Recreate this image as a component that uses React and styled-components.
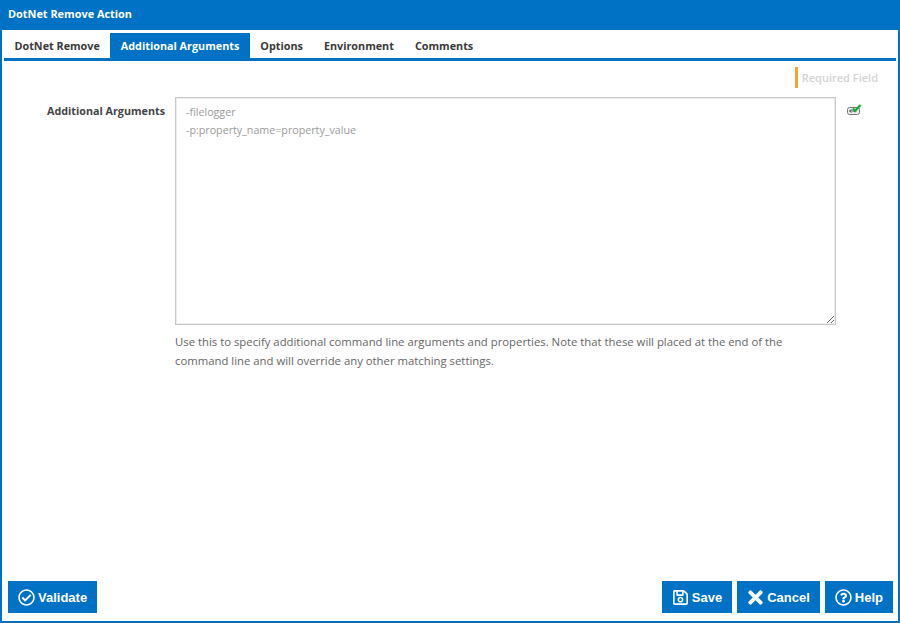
import React from 'react';
import styled, { createGlobalStyle } from 'styled-components';
import { FaRegCheckCircle, FaRegSave, FaTimes, FaRegQuestionCircle } from 'react-icons/fa';

const blue = '#0072c6';

const Global = createGlobalStyle`
  html, body {
    margin: 0;
    padding: 0;
    height: 623px;
    overflow: hidden;
    background: #ffffff;
  }
  body {
    font-family: 'Open Sans', 'Liberation Sans', sans-serif;
  }
`;

const Window = styled.div`
  box-sizing: border-box;
  width: 900px;
  height: 623px;
  display: flex;
  flex-direction: column;
  border: 2px solid ${blue};
  border-top: 0;
`;

const TitleBar = styled.div`
  height: 30px;
  flex: none;
  display: flex;
  align-items: center;
  padding-left: 6px;
  padding-bottom: 3px;
  box-sizing: border-box;
  background: ${blue};
  color: #ffffff;
  font-size: 10.9px;
  font-weight: 700;
`;

const Tabs = styled.div`
  display: flex;
  flex: none;
  height: 25px;
  margin: 3px 2px 0;
  border-bottom: 3px solid ${blue};
`;

const Tab = styled.div`
  display: flex;
  align-items: center;
  padding: 0 10.5px 1px;
  font-size: 10.8px;
  font-weight: 700;
  color: ${({ $active }) => ($active ? '#ffffff' : '#3a3a3a')};
  background: ${({ $active }) => ($active ? blue : 'transparent')};
`;

const Content = styled.div`
  flex: 1;
  display: flex;
  flex-direction: column;
  padding: 6px 20px 0 0;
`;

const Legend = styled.div`
  align-self: flex-end;
  height: 21px;
  display: flex;
  align-items: center;
  box-sizing: border-box;
  border-left: 3px solid #f7a52b;
  padding-left: 4px;
  font-size: 11px;
  font-weight: 600;
  color: #d4d4d4;
`;

const Row = styled.div`
  display: flex;
  margin-top: 9px;
`;

const Label = styled.div`
  width: 163px;
  flex: none;
  text-align: right;
  font-size: 10.75px;
  font-weight: 700;
  color: #444444;
  line-height: 15px;
  padding-top: 7px;
`;

const Field = styled.div`
  margin-left: 10px;
  width: 661px;
  flex: none;
`;

const Input = styled.textarea`
  display: block;
  box-sizing: border-box;
  width: 661px;
  height: 228px;
  border: 1px solid #c8c8c8;
  box-shadow: inset 0 0 0 1px #ececec;
  padding: 5px 10px;
  margin: 0;
  outline: 0;
  font-family: inherit;
  font-size: 10.7px;
  line-height: 18px;
  &::placeholder {
    color: #9a9a9a;
    opacity: 1;
  }
`;

const Hint = styled.p`
  margin: 7px 0 0;
  padding-right: 30px;
  font-size: 11.33px;
  line-height: 19px;
  color: #666666;
`;

const Status = styled.div`
  margin-left: 11px;
  margin-top: 3px;
  width: 15px;
  height: 13px;
`;

const Footer = styled.div`
  flex: none;
  display: flex;
  justify-content: space-between;
  padding: 0 5px 8px 6px;
`;

const Group = styled.div`
  display: flex;
  gap: 5px;
`;

const Button = styled.button`
  height: 32px;
  display: flex;
  align-items: center;
  gap: 3px;
  padding: 0 10px;
  border: 0;
  background: ${blue};
  color: #ffffff;
  font-family: 'Liberation Sans', Arial, sans-serif;
  font-size: 13px;
  font-weight: 700;
  svg {
    width: 17px;
    height: 17px;
  }
`;

const CancelIcon = styled(FaTimes)`
  && {
    width: 21px;
    height: 21px;
    margin: 0 -2px;
  }
`;

const StatusIcon = () => (
  <svg width="15" height="13" viewBox="0 0 15 13">
    <rect x="0.5" y="3.5" width="12" height="7" rx="2" fill="#eeeeee" stroke="#777777" />
    <path d="M2.5 7h7M2.5 7l2-1.5M2.5 7l2 1.5" stroke="#555555" fill="none" />
    <path d="M6 4.5l2 2.5 5.5-6" stroke="#1fa83c" strokeWidth="2.4" fill="none" />
  </svg>
);

const App = () => (
  <Window>
    <Global />
    <TitleBar>DotNet Remove Action</TitleBar>
    <Tabs>
      <Tab>DotNet Remove</Tab>
      <Tab $active>Additional Arguments</Tab>
      <Tab>Options</Tab>
      <Tab>Environment</Tab>
      <Tab>Comments</Tab>
    </Tabs>
    <Content>
      <Legend>Required Field</Legend>
      <Row>
        <Label>Additional Arguments</Label>
        <Field>
          <Input placeholder={'-filelogger\n-p:property_name=property_value'} />
          <Hint>
            Use this to specify additional command line arguments and properties. Note that these will placed at the end of the command line and will override any other matching settings.
          </Hint>
        </Field>
        <Status><StatusIcon /></Status>
      </Row>
    </Content>
    <Footer>
      <Button><FaRegCheckCircle />Validate</Button>
      <Group>
        <Button><FaRegSave />Save</Button>
        <Button><CancelIcon />Cancel</Button>
        <Button><FaRegQuestionCircle />Help</Button>
      </Group>
    </Footer>
  </Window>
);

export default App;
